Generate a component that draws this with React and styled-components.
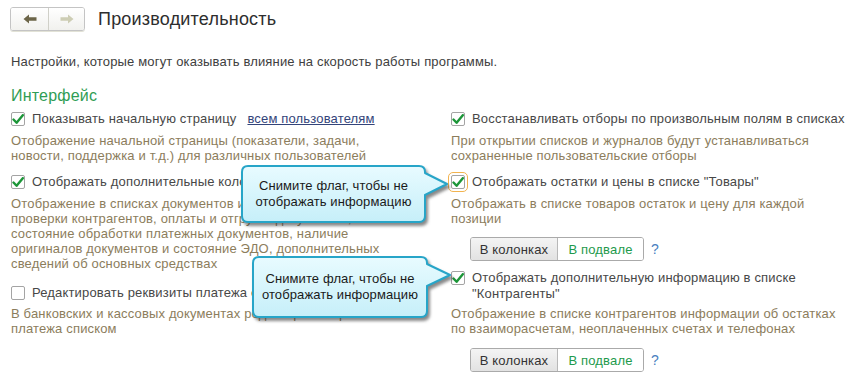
import React from "react";
import styled, { createGlobalStyle } from "styled-components";

const GlobalStyle = createGlobalStyle`
  html, body { margin: 0; padding: 0; background: #ffffff; }
  body { font-family: "Liberation Sans", Arial, sans-serif; }
  #root { width: 862px; height: 387px; }
`;

const Page = styled.div`
  position: relative;
  width: 862px;
  height: 387px;
  box-sizing: border-box;
  padding: 7px 0 0 11px;
  overflow: hidden;
  font-size: 13px;
  letter-spacing: 0.16px;
  color: #4a4a4a;
`;

const Header = styled.div`
  display: flex;
  align-items: center;
  gap: 13px;
  height: 24px;
  margin-left: -1px;
`;

const NavGroup = styled.div`
  display: flex;
  height: 24px;
  box-sizing: border-box;
  border: 1px solid #c4c4c4;
  border-radius: 3px;
  overflow: hidden;
  box-shadow: 0 1px 0 #e2e2d6;
`;

const NavButton = styled.div`
  width: ${(p) => p.$w}px;
  height: 100%;
  display: flex;
  align-items: center;
  justify-content: center;
  background: linear-gradient(#ffffff, #f1f1ee);
  border-left: ${(p) => (p.$divider ? "1px solid #d0d0c8" : "none")};
`;

const Title = styled.h1`
  margin: 0;
  font-size: 18px;
  letter-spacing: 0.2px;
  font-weight: normal;
  color: #2e2e2e;
  line-height: 24px;
`;

const Intro = styled.p`
  margin: 23px 0 0;
  line-height: 16px;
  color: #404040;
`;

const SectionTitle = styled.h2`
  margin: 16px 0 0;
  font-size: 16px;
  line-height: 20px;
  letter-spacing: 0.2px;
  font-weight: normal;
  color: #2f9d55;
`;

const Columns = styled.div`
  display: grid;
  grid-template-columns: 440px 411px;
  margin-top: 5px;
`;

const Column = styled.div`
  display: flex;
  flex-direction: column;
`;

const Item = styled.div`
  margin-top: ${(p) => p.$mt || 0}px;
`;

const LabelRow = styled.div`
  display: flex;
  align-items: flex-start;
  gap: 7px;
  line-height: 16px;
  color: #474747;
  white-space: nowrap;
`;

const Box = styled.span`
  flex: none;
  width: 14px;
  height: 14px;
  margin-top: 1px;
  box-sizing: border-box;
  border: 1px solid #a4a4a4;
  border-radius: 2px;
  background: #ffffff;
  display: flex;
  align-items: center;
  justify-content: center;
  outline: ${(p) => (p.$focus ? "1px solid #f2b34f" : "none")};
  outline-offset: 2px;
`;

const Link = styled.span`
  margin-left: 11px;
  color: #33447a;
  text-decoration: underline;
`;

const Desc = styled.div`
  margin-top: ${(p) => p.$mt ?? 6}px;
  line-height: 15px;
  color: #8c7d5c;
  white-space: nowrap;
`;

const Toggle = styled.div`
  display: flex;
  align-items: center;
  gap: 7px;
  margin: ${(p) => p.$mt}px 0 0 19px;
`;

const ToggleGroup = styled.div`
  display: flex;
  height: 24px;
  box-sizing: border-box;
  border: 1px solid #aaaaaa;
  border-radius: 3px;
  overflow: hidden;
`;

const ToggleButton = styled.div`
  width: ${(p) => p.$w}px;
  display: flex;
  align-items: center;
  justify-content: center;
  font-size: 13px;
  color: ${(p) => (p.$active ? "#333333" : "#1e9a4c")};
  background: ${(p) =>
    p.$active ? "linear-gradient(#f4f4f4, #e2e2e2)" : "#ffffff"};
  border-left: ${(p) => (p.$divider ? "1px solid #b8b8b8" : "none")};
`;

const Help = styled.span`
  color: #4a7fc0;
  font-size: 14px;
`;

const CalloutWrap = styled.div`
  position: absolute;
  left: ${(p) => p.$x}px;
  top: ${(p) => p.$y}px;
  width: ${(p) => p.$w}px;
  height: ${(p) => p.$h}px;
  z-index: 5;
`;

const CalloutShape = styled.svg`
  position: absolute;
  left: 0;
  top: 0;
  overflow: visible;
  filter: drop-shadow(2px 3px 1.5px rgba(40, 40, 40, 0.55));
`;

const CalloutText = styled.div`
  position: relative;
  height: 100%;
  display: flex;
  align-items: center;
  justify-content: center;
  text-align: center;
  line-height: 16px;
  font-size: 13px;
  letter-spacing: 0.1px;
  color: #1a1a1a;
`;

const Check = () => (
  <svg width="12" height="11" viewBox="0 0 12 11">
    <path
      d="M1.5 5.5 L4.6 8.8 L10.8 1.2"
      fill="none"
      stroke="#1c9638"
      strokeWidth="2.4"
      strokeLinecap="round"
      strokeLinejoin="round"
    />
  </svg>
);

const Checkbox = ({ checked, focus }) => (
  <Box $focus={focus}>{checked && <Check />}</Box>
);

const Arrow = ({ dir, color }) => (
  <svg width="14" height="10" viewBox="0 0 14 10">
    <path
      d={
        dir === "left"
          ? "M0.5 5 L6 0.5 V3.3 H13.5 V6.7 H6 V9.5 Z"
          : "M13.5 5 L8 0.5 V3.3 H0.5 V6.7 H8 V9.5 Z"
      }
      fill={color}
    />
  </svg>
);

const bubblePath = (w, h, r, py1, py2, tx, ty) =>
  `M${r},1 H${w - r} Q${w - 1},1 ${w - 1},${r} V${py1} L${tx},${ty} L${w - 1},${py2} V${h - r} Q${w - 1},${h - 1} ${w - r},${h - 1} H${r} Q1,${h - 1} 1,${h - r} V${r} Q1,1 ${r},1 Z`;

const Callout = ({ x, y, w, h, tx, ty, id }) => (
  <CalloutWrap $x={x} $y={y} $w={w} $h={h}>
    <CalloutShape width={tx + 2} height={h}>
      <defs>
        <linearGradient id={id} x1="0" y1="0" x2="0" y2="1">
          <stop offset="0" stopColor="#e8fbff" />
          <stop offset="1" stopColor="#c6eff9" />
        </linearGradient>
      </defs>
      <path
        d={bubblePath(w, h, 7, 8, 30, tx, ty)}
        fill={`url(#${id})`}
        stroke="#27a5c8"
        strokeWidth="2"
        strokeLinejoin="round"
      />
    </CalloutShape>
    <CalloutText>
      Снимите флаг, чтобы не
      <br />
      отображать информацию
    </CalloutText>
  </CalloutWrap>
);

const Lines = ({ lines }) =>
  lines.map((l, i) => (
    <React.Fragment key={i}>
      {i > 0 && <br />}
      {l}
    </React.Fragment>
  ));

const Segments = ({ mt }) => (
  <Toggle $mt={mt}>
    <ToggleGroup>
      <ToggleButton $w={86} $active>
        В колонках
      </ToggleButton>
      <ToggleButton $w={85} $divider>
        В подвале
      </ToggleButton>
    </ToggleGroup>
    <Help>?</Help>
  </Toggle>
);

const Setting = ({ mt, checked, focus, label, desc, descMt, children }) => (
  <Item $mt={mt}>
    <LabelRow>
      <Checkbox checked={checked} focus={focus} />
      <span>{label}</span>
    </LabelRow>
    <Desc $mt={descMt}>
      <Lines lines={desc} />
    </Desc>
    {children}
  </Item>
);

export default function App() {
  return (
    <>
      <GlobalStyle />
      <Page>
        <Header>
          <NavGroup>
            <NavButton $w={37}>
              <Arrow dir="left" color="#6c6548" />
            </NavButton>
            <NavButton $w={35} $divider>
              <Arrow dir="right" color="#cdcdb4" />
            </NavButton>
          </NavGroup>
          <Title>Производительность</Title>
        </Header>

        <Intro>
          Настройки, которые могут оказывать влияние на скорость работы
          программы.
        </Intro>

        <SectionTitle>Интерфейс</SectionTitle>

        <Columns>
          <Column>
            <Setting
              checked
              label={
                <>
                  Показывать начальную страницу
                  <Link>всем пользователям</Link>
                </>
              }
              desc={[
                "Отображение начальной страницы (показатели, задачи,",
                "новости, поддержка и т.д.) для различных пользователей",
              ]}
            />
            <Setting
              mt={11}
              checked
              label="Отображать дополнительные колонки в списках"
              desc={[
                "Отображение в списках документов и справочников результатов",
                "проверки контрагентов, оплаты и отгрузки документов,",
                "состояние обработки платежных документов, наличие",
                "оригиналов документов и состояние ЭДО, дополнительных",
                "сведений об основных средствах",
              ]}
            />
            <Setting
              mt={14}
              label="Редактировать реквизиты платежа списком"
              descMt={5}
              desc={[
                "В банковских и кассовых документах редактировать реквизиты",
                "платежа списком",
              ]}
            />
          </Column>

          <Column>
            <Setting
              checked
              label="Восстанавливать отборы по произвольным полям в списках"
              desc={[
                "При открытии списков и журналов будут устанавливаться",
                "сохраненные пользовательские отборы",
              ]}
            />
            <Setting
              mt={11}
              checked
              focus
              label={'Отображать остатки и цены в списке "Товары"'}
              desc={[
                "Отображать в списке товаров остаток и цену для каждой",
                "позиции",
              ]}
            >
              <Segments mt={11} />
            </Setting>
            <Setting
              mt={9}
              checked
              label={
                <Lines
                  lines={[
                    "Отображать дополнительную информацию в списке",
                    '"Контрагенты"',
                  ]}
                />
              }
              descMt={4}
              desc={[
                "Отображение в списке контрагентов информации об остатках",
                "по взаиморасчетам, неоплаченных счетах и телефонах",
              ]}
            >
              <Segments mt={12} />
            </Setting>
          </Column>
        </Columns>

        <Callout id="cg1" x={241} y={165} w={185} h={58} tx={206} ty={19} />
        <Callout id="cg2" x={252} y={256} w={176} h={62} tx={198} ty={19} />
      </Page>
    </>
  );
}
